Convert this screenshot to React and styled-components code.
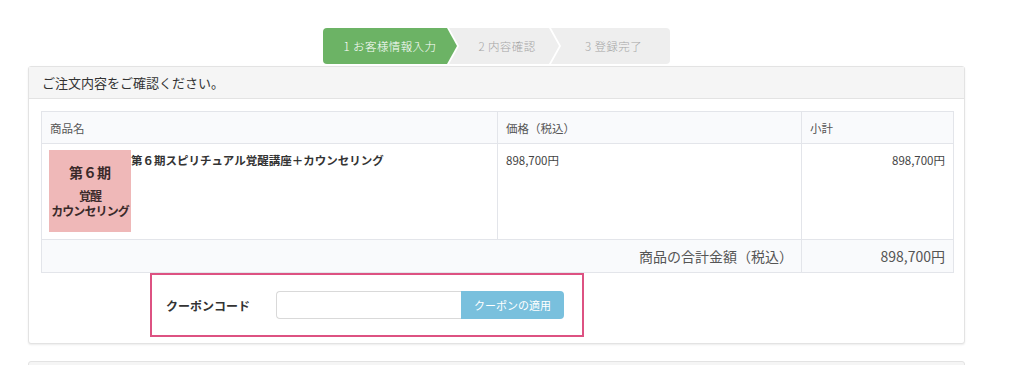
import React from 'react';
import styled, { createGlobalStyle } from 'styled-components';

const GlobalStyle = createGlobalStyle`
  html, body {
    margin: 0;
    padding: 0;
    background: #fff;
  }
  body {
    font-family: 'Noto Sans CJK JP', 'Noto Sans', sans-serif;
    color: #333;
  }
`

const Page = styled.div`
  width: 937px;
  padding: 28px 0 0 28px;
`

const Stepper = styled.div`
  display: flex;
  justify-content: center;
  height: 36px;
  margin-bottom: 2px;
`

const Step = styled.div`
  display: flex;
  align-items: center;
  justify-content: center;
  width: ${p => p.width}px;
  height: 36px;
  margin-left: ${p => (p.first ? 0 : -8)}px;
  padding-left: ${p => (p.first ? 0 : 6)}px;
  box-sizing: border-box;
  font-size: 11.5px;
  font-weight: 300;
  letter-spacing: 0.4px;
  color: ${p => (p.active ? '#fff' : '#a6a6a6')};
  background: ${p => (p.active ? '#6cb365' : '#eeeeee')};
  border-radius: ${p => (p.first ? '4px 0 0 4px' : p.last ? '0 4px 4px 0' : '0')};
  clip-path: ${p =>
    p.first
      ? 'polygon(0 0, calc(100% - 10px) 0, 100% 50%, calc(100% - 10px) 100%, 0 100%)'
      : p.last
        ? 'polygon(0 0, 100% 0, 100% 100%, 0 100%, 10px 50%)'
        : 'polygon(0 0, calc(100% - 10px) 0, 100% 50%, calc(100% - 10px) 100%, 0 100%, 10px 50%)'};
`

const Panel = styled.div`
  border: 1px solid #e3e3e3;
  border-radius: 3px;
  box-shadow: 0 1px 2px rgba(0, 0, 0, 0.08);
  background: #fff;
  margin-bottom: 17px;
`

const PanelHeader = styled.div`
  background: #f5f5f5;
  border-bottom: 1px solid #e3e3e3;
  height: 31px;
  padding: 0 13px;
  display: flex;
  align-items: center;
  font-size: 13px;
  color: #333;
`

const PanelBody = styled.div`
  padding: 12px 12px 6px 12px;
`

const Table = styled.table`
  width: 912px;
  table-layout: fixed;
  border-collapse: collapse;
  font-size: 11.5px;
  color: #444;
`

const Th = styled.th`
  background: #f9fafc;
  border: 1px solid #e3e5ea;
  height: 31px;
  padding: 0 8px;
  text-align: left;
  font-weight: 400;
  color: #555;
`

const Td = styled.td`
  border: 1px solid #e3e5ea;
  padding: ${p => (p.tight ? '6px 7px' : '8px 8px')};
  vertical-align: top;
  text-align: ${p => (p.right ? 'right' : 'left')};
`

const TotalTd = styled.td`
  border: 1px solid #e3e5ea;
  background: #f9fafc;
  height: 32px;
  padding: 0 ${p => (p.wide ? 16 : 8)}px 0 8px;
  text-align: right;
  font-size: 14px;
  color: #555;
`

const Product = styled.div`
  display: flex;
`

const Thumb = styled.div`
  width: 82px;
  height: 82px;
  flex-shrink: 0;
  background: #efb8b8;
  display: flex;
  flex-direction: column;
  align-items: center;
  justify-content: center;
  font-weight: 700;
  color: #3a2a2a;
  line-height: 1.3;
  white-space: nowrap;
`

const ThumbTitle = styled.div`
  font-size: 14px;
  margin-bottom: 6px;
`

const ThumbLine = styled.div`
  font-size: 12px;
  letter-spacing: -0.9px;
`

const ProductName = styled.div`
  font-weight: 700;
  font-size: 11.5px;
  color: #333;
  padding-top: 2px;
`

const CouponBox = styled.div`
  margin-left: 109px;
  width: 434px;
  height: 64px;
  box-sizing: border-box;
  border: 2px solid #dd5282;
  display: flex;
  align-items: center;
  padding-left: 14px;
`

const CouponLabel = styled.div`
  width: 110px;
  font-size: 12px;
  font-weight: 700;
  color: #333;
`

const CouponInput = styled.input`
  width: 185px;
  height: 28px;
  box-sizing: border-box;
  border: 1px solid #d9d9d9;
  border-right: none;
  border-radius: 4px 0 0 4px;
  outline: none;
`

const CouponButton = styled.button`
  height: 28px;
  width: 103px;
  border: none;
  border-radius: 0 4px 4px 0;
  background: #79c0dd;
  color: #fff;
  font-family: inherit;
  font-size: 11px;
  padding: 0;
`

const NextPanel = styled.div`
  height: 40px;
  border: 1px solid #e3e3e3;
  border-radius: 3px;
  background: #f5f5f5;
`

export default function App () {
  return (
    <Page>
      <GlobalStyle />
      <Stepper>
        <Step first active width={134}>1 お客様情報入力</Step>
        <Step width={110}>2 内容確認</Step>
        <Step last width={119}>3 登録完了</Step>
      </Stepper>
      <Panel>
        <PanelHeader>ご注文内容をご確認ください。</PanelHeader>
        <PanelBody>
          <Table>
            <colgroup>
              <col style={{ width: 456 }} />
              <col style={{ width: 304 }} />
              <col style={{ width: 152 }} />
            </colgroup>
            <thead>
              <tr>
                <Th>商品名</Th>
                <Th>価格（税込）</Th>
                <Th>小計</Th>
              </tr>
            </thead>
            <tbody>
              <tr>
                <Td tight style={{ height: 83 }}>
                  <Product>
                    <Thumb>
                      <ThumbTitle>第６期</ThumbTitle>
                      <ThumbLine>覚醒</ThumbLine>
                      <ThumbLine>カウンセリング</ThumbLine>
                    </Thumb>
                    <ProductName>第６期スピリチュアル覚醒講座＋カウンセリング</ProductName>
                  </Product>
                </Td>
                <Td>898,700円</Td>
                <Td right>898,700円</Td>
              </tr>
              <tr>
                <TotalTd colSpan={2}>商品の合計金額（税込）</TotalTd>
                <TotalTd>898,700円</TotalTd>
              </tr>
            </tbody>
          </Table>
          <CouponBox>
            <CouponLabel>クーポンコード</CouponLabel>
            <CouponInput />
            <CouponButton>クーポンの適用</CouponButton>
          </CouponBox>
        </PanelBody>
      </Panel>
      <NextPanel />
    </Page>
  )
}
